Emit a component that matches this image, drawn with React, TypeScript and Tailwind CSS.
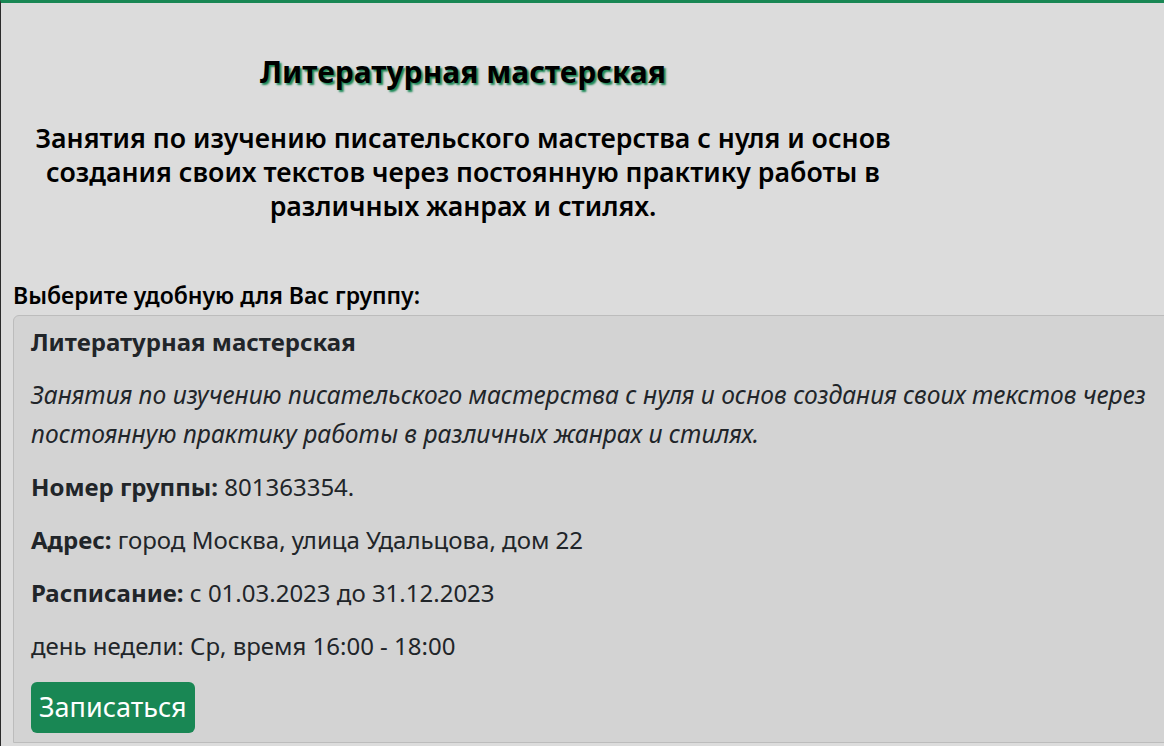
export default function App() {
  const font = { fontFamily: '"Noto Sans", "DejaVu Sans", sans-serif' };
  return (
    <div
      className="min-h-screen w-full overflow-hidden bg-[#dcdcdc] border-t-[3px] border-t-[#198754] border-l border-l-[#2b2b2b] text-[#212529]"
      style={font}
    >
      <div className="w-[924px] text-center">
        <h1 className="mt-[50px] text-[30px] leading-[38px] font-bold text-black [text-shadow:2px_2px_2px_#198754]">
          Литературная мастерская
        </h1>
        <p className="mt-[30px] px-[20px] text-[26.7px] leading-[34px] font-semibold text-black">
          Занятия по изучению писательского мастерства с нуля и основ создания своих текстов через постоянную практику работы в различных жанрах и стилях.
        </p>
      </div>
      <div className="mt-[57px] pl-[12px]">
        <div className="text-[23px] leading-[30px] font-semibold text-black">Выберите удобную для Вас группу:</div>
        <div className="mt-[5px] w-[1200px] rounded-tl-[6px] border border-[#bcbcbc] bg-[#d3d3d3] px-[17px] pt-[11px] pb-[9px]">
          <div className="text-[24px] leading-[30px] font-bold">Литературная мастерская</div>
          <p className="mt-[18px] w-[1135px] text-[24.6px] leading-[39px] italic">
            Занятия по изучению писательского мастерства с нуля и основ создания своих текстов через постоянную практику работы в различных жанрах и стилях.
          </p>
          <p className="mt-[14px] text-[24px] leading-[39px]">
            <b>Номер группы:</b> 801363354.
          </p>
          <p className="mt-[14px] text-[24px] leading-[39px]">
            <b>Адрес:</b> город Москва, улица Удальцова, дом 22
          </p>
          <p className="mt-[14px] text-[24px] leading-[39px]">
            <b>Расписание:</b> с 01.03.2023 до 31.12.2023
          </p>
          <p className="mt-[14px] text-[24px] leading-[39px]">день недели: Ср, время 16:00 - 18:00</p>
          <button className="mt-[17px] h-[51px] rounded-[6px] bg-[#198754] px-[8px] text-[27px] text-white">
            Записаться
          </button>
        </div>
      </div>
    </div>
  );
}
